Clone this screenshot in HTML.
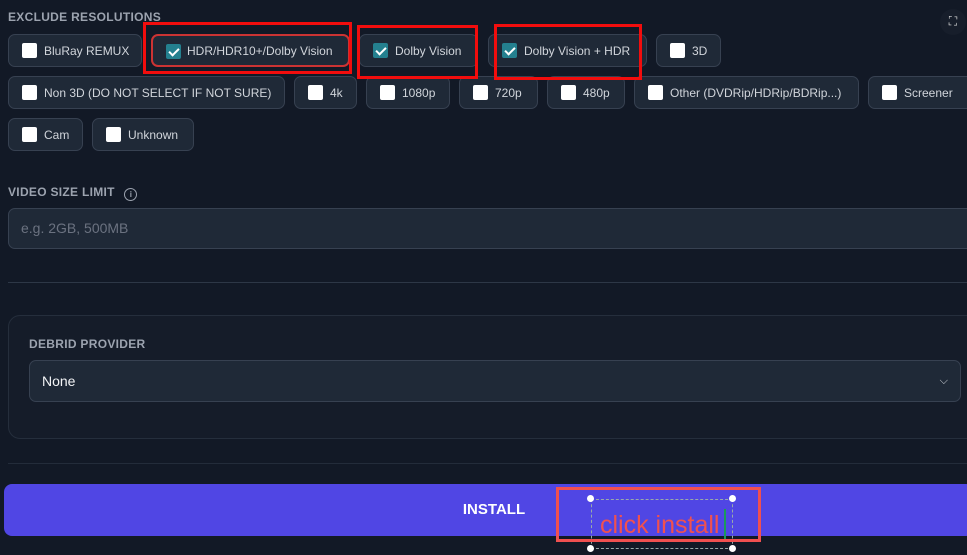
<!DOCTYPE html>
<html><head><meta charset="utf-8"><style>
body{margin:0;width:967px;height:555px;overflow:hidden;background:#121926;font-family:"Liberation Sans",sans-serif;position:relative}
.a{position:absolute}
.lbl{color:#9ca3af;font-size:12px;font-weight:bold;letter-spacing:.3px}
.c{position:absolute;height:33px;background:#1f2937;border:1px solid #374151;border-radius:7px;box-sizing:border-box;color:#d1d5db;font-size:12px;line-height:32px;padding-left:35px;white-space:nowrap}
.c::before{content:"";position:absolute;left:13px;top:8px;width:15px;height:15px;background:#fff;border-radius:2px}
.c.k::before{background:#24808f}
.c.k::after{content:"";position:absolute;left:18px;top:10px;width:4px;height:8px;border:solid #fff;border-width:0 2.5px 2.5px 0;transform:rotate(45deg)}
.r{position:absolute;border:3px solid #f20d0d;box-sizing:border-box}
</style></head><body>
<div class="a lbl" style="left:8px;top:10px">EXCLUDE RESOLUTIONS</div>
<div class="a" style="left:940px;top:9px;width:26px;height:26px;border-radius:13px;background:#171e2b;color:#ddd;font-size:12px;text-align:center;line-height:24px">⛶</div>
<div class="c" style="left:8px;top:34px;width:134px">BluRay REMUX</div>
<div class="c k" style="left:151px;top:34px;width:199px;border-color:#c33;border-width:2px;line-height:30px;padding-left:34px">HDR/HDR10+/Dolby Vision</div>
<div class="c k" style="left:359px;top:34px;width:119px">Dolby Vision</div>
<div class="c k" style="left:488px;top:34px;width:159px">Dolby Vision + HDR</div>
<div class="c" style="left:656px;top:34px;width:65px">3D</div>
<div class="c" style="left:8px;top:76px;width:277px">Non 3D (DO NOT SELECT IF NOT SURE)</div>
<div class="c" style="left:294px;top:76px;width:63px">4k</div>
<div class="c" style="left:366px;top:76px;width:84px">1080p</div>
<div class="c" style="left:459px;top:76px;width:79px">720p</div>
<div class="c" style="left:547px;top:76px;width:78px">480p</div>
<div class="c" style="left:634px;top:76px;width:225px">Other (DVDRip/HDRip/BDRip...)</div>
<div class="c" style="left:868px;top:76px;width:110px">Screener</div>
<div class="c" style="left:8px;top:118px;width:75px">Cam</div>
<div class="c" style="left:92px;top:118px;width:102px">Unknown</div>
<div class="r" style="left:143px;top:22px;width:209px;height:52px"></div>
<div class="r" style="left:357px;top:25px;width:121px;height:54px"></div>
<div class="r" style="left:494px;top:24px;width:148px;height:56px"></div>
<div class="a lbl" style="left:8px;top:185px">VIDEO SIZE LIMIT <span style="display:inline-block;width:11px;height:11px;border:1px solid #9ca3af;border-radius:50%;font-size:8px;text-align:center;line-height:11px;margin-left:6px;vertical-align:-1px">i</span></div>
<div class="a" style="left:8px;top:208px;width:980px;height:41px;background:#1f2937;border:1px solid #374151;border-radius:7px;box-sizing:border-box;color:#6b7280;font-size:14px;line-height:39px;padding-left:12px">e.g. 2GB, 500MB</div>
<div class="a" style="left:8px;top:282px;width:959px;height:1px;background:#2d3746"></div>
<div class="a" style="left:8px;top:315px;width:980px;height:124px;border:1px solid #252e3c;border-radius:12px;box-sizing:border-box;background:#151c29"></div>
<div class="a lbl" style="left:29px;top:337px">DEBRID PROVIDER</div>
<div class="a" style="left:29px;top:360px;width:932px;height:42px;background:#1f2937;border:1px solid #374151;border-radius:7px;box-sizing:border-box;color:#f3f4f6;font-size:14px;line-height:40px;padding-left:12px">None<span style="position:absolute;right:12px;top:0;color:#d1d5db;font-size:11px">&#x2335;</span></div>
<div class="a" style="left:8px;top:463px;width:959px;height:1px;background:#232c3a"></div>
<div class="a" style="left:4px;top:484px;width:970px;height:52px;background:#5046e4;border-radius:8px;color:#fff;font-weight:bold;font-size:15px;line-height:52px;text-align:center;box-sizing:border-box;padding-left:10px">INSTALL</div>
<div class="a" style="left:591px;top:499px;width:142px;height:50px;border:1px dashed #9aa;box-sizing:border-box"></div>
<div class="a" style="left:587px;top:495px;width:7px;height:7px;border-radius:50%;background:#fff"></div>
<div class="a" style="left:729px;top:495px;width:7px;height:7px;border-radius:50%;background:#fff"></div>
<div class="a" style="left:587px;top:545px;width:7px;height:7px;border-radius:50%;background:#fff"></div>
<div class="a" style="left:729px;top:545px;width:7px;height:7px;border-radius:50%;background:#fff"></div>
<div class="r" style="left:556px;top:487px;width:205px;height:55px;border-color:#f05050"></div>
<div class="a" style="left:600px;top:511px;color:#f0514f;font-size:25px;line-height:28px">click install</div>
<div class="a" style="left:724px;top:509px;width:2px;height:30px;background:#1a9a5a"></div>
</body></html>
